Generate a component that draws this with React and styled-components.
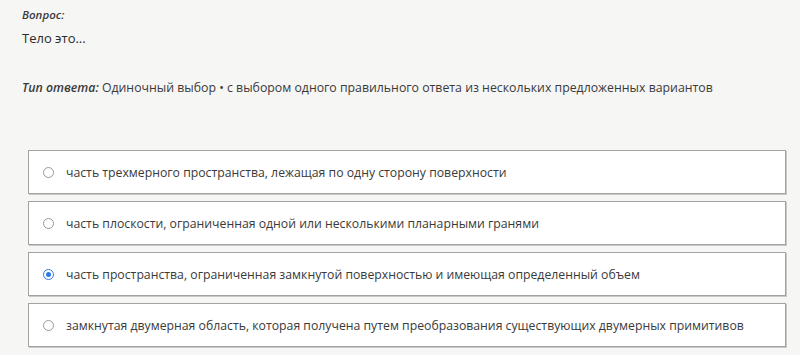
import React from 'react';
import styled, { createGlobalStyle } from 'styled-components';

const GlobalStyle = createGlobalStyle`
  html, body {
    margin: 0;
    padding: 0;
    background: #f6f6f5;
  }
  body {
    font-family: 'Open Sans', 'Noto Sans', sans-serif;
    color: #333;
  }
`;

const Page = styled.div`
  width: 800px;
  height: 355px;
  padding: 7px 14px 0 22px;
  box-sizing: border-box;
  background: #f6f6f5;
  overflow: hidden;
`;

const Label = styled.div`
  font-size: 11.5px;
  font-style: italic;
  font-weight: 600;
  color: #3a3a3a;
  line-height: 16px;
`;

const Question = styled.div`
  font-size: 13px;
  line-height: 18px;
  color: #2b2b2b;
  margin-top: 6px;
`;

const AnswerType = styled.div`
  margin-top: 33px;
  font-size: 12.3px;
  line-height: 16px;
  color: #3a3a3a;
`;

const TypeLabel = styled.span`
  font-style: italic;
  font-weight: 600;
`;

const Options = styled.div`
  margin-top: 54px;
  margin-left: 6px;
  display: flex;
  flex-direction: column;
  gap: 7px;
`;

const Option = styled.label`
  display: flex;
  align-items: center;
  height: 44px;
  box-sizing: border-box;
  padding-left: 14px;
  background: #fff;
  border: 1px solid #a2a2a2;
  box-shadow: 1px 1px 0 #c8c8c8;
  font-size: 12.25px;
  color: #3a3a3a;
  cursor: pointer;
`;

const Radio = styled.span`
  width: 9px;
  height: 9px;
  border-radius: 50%;
  border: 1px solid ${p => (p.checked ? '#2c7be5' : '#9a9a9a')};
  background: #fff;
  margin-right: 12px;
  display: flex;
  align-items: center;
  justify-content: center;
  flex-shrink: 0;

  &::after {
    content: '';
    width: 5px;
    height: 5px;
    border-radius: 50%;
    background: ${p => (p.checked ? '#2c7be5' : 'transparent')};
  }
`;

const answers = [
  'часть трехмерного пространства, лежащая по одну сторону поверхности',
  'часть плоскости, ограниченная одной или несколькими планарными гранями',
  'часть пространства, ограниченная замкнутой поверхностью и имеющая определенный объем',
  'замкнутая двумерная область, которая получена путем преобразования существующих двумерных примитивов',
];

export default function App() {
  const selected = 2;
  return (
    <>
      <GlobalStyle />
      <Page>
        <Label>Вопрос:</Label>
        <Question>Тело это...</Question>
        <AnswerType>
          <TypeLabel>Тип ответа:</TypeLabel> Одиночный выбор • с выбором одного правильного ответа из нескольких предложенных вариантов
        </AnswerType>
        <Options>
          {answers.map((a, i) => (
            <Option key={i}>
              <Radio checked={i === selected} />
              {a}
            </Option>
          ))}
        </Options>
      </Page>
    </>
  );
}
